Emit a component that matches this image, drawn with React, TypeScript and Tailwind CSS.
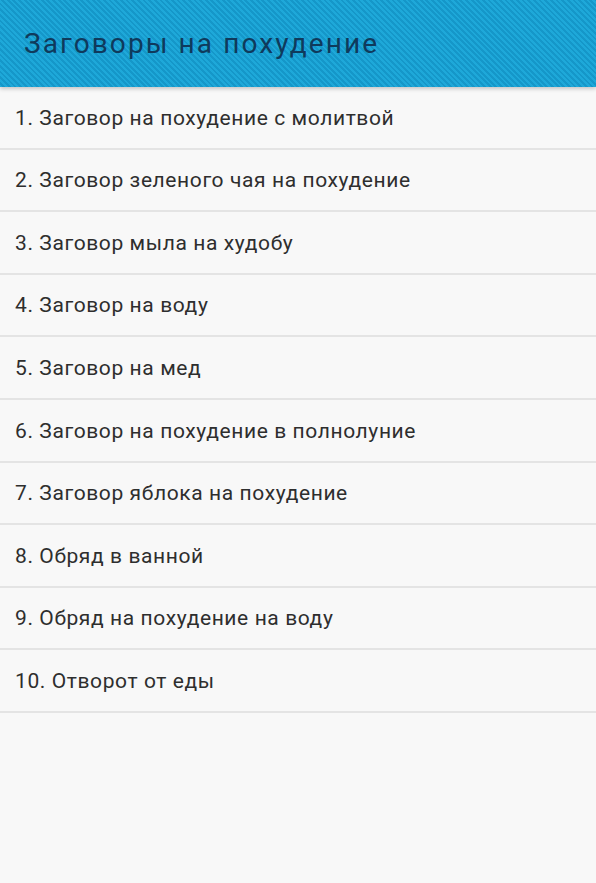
const items = [
  '1. Заговор на похудение с молитвой',
  '2. Заговор зеленого чая на похудение',
  '3. Заговор мыла на худобу',
  '4. Заговор на воду',
  '5. Заговор на мед',
  '6. Заговор на похудение в полнолуние',
  '7. Заговор яблока на похудение',
  '8. Обряд в ванной',
  '9. Обряд на похудение на воду',
  '10. Отворот от еды',
];

export default function App() {
  return (
    <div className="min-h-[883px] w-[596px] bg-[#f8f8f8] font-['Roboto',sans-serif]">
      <div className="relative z-10 h-[87px] flex items-center px-[24px] bg-[repeating-linear-gradient(45deg,#1ea8d9_0px,#1ea8d9_2px,#1597c9_2px,#1597c9_4px)] shadow-[0_2px_4px_rgba(0,0,0,0.2)]">
        <h1 className="text-[28px] tracking-[2.1px] text-[#0f3a5c] leading-none">Заговоры на похудение</h1>
      </div>
      <ul>
        {items.map((t, i) => (
          <li
            key={i}
            className="h-[62.6px] flex items-center pl-[15px] pt-[2px] border-b-2 border-[#e4e4e4] text-[21px] tracking-[0.6px] text-[#2e2e2e]"
          >
            {t}
          </li>
        ))}
      </ul>
    </div>
  );
}
